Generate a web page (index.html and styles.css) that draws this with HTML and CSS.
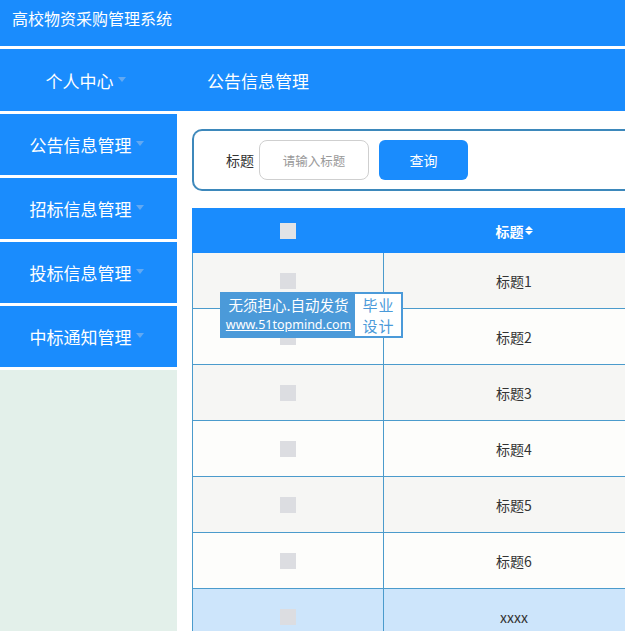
FILE: index.html
```html
<!DOCTYPE html>
<html lang="zh">
<head>
<meta charset="utf-8">
<title>高校物资采购管理系统</title>
<link rel="stylesheet" href="styles.css">
</head>
<body>
<div class="page">
  <header class="topbar">高校物资采购管理系统</header>
  <nav class="navbar">
    <div class="nav-home">个人中心<span class="caret"></span></div>
    <div class="nav-title">公告信息管理</div>
  </nav>
  <div class="layout">
    <aside class="sidebar">
      <div class="side-item">公告信息管理<span class="caret"></span></div>
      <div class="side-item">招标信息管理<span class="caret"></span></div>
      <div class="side-item">投标信息管理<span class="caret"></span></div>
      <div class="side-item">中标通知管理<span class="caret"></span></div>
      <div class="side-fill"></div>
    </aside>
    <main class="main">
      <div class="search">
        <span class="search-label">标题</span>
        <div class="search-input">请输入标题</div>
        <div class="search-btn">查询</div>
      </div>
      <div class="table">
        <div class="row head">
          <div class="cell c1"><span class="check"></span></div>
          <div class="cell c2">标题<span class="sort"><i class="up"></i><i class="down"></i></span></div>
        </div>
        <div class="row odd"><div class="cell c1"><span class="check"></span></div><div class="cell c2">标题1</div></div>
        <div class="row even"><div class="cell c1"><span class="check"></span></div><div class="cell c2">标题2</div></div>
        <div class="row odd"><div class="cell c1"><span class="check"></span></div><div class="cell c2">标题3</div></div>
        <div class="row even"><div class="cell c1"><span class="check"></span></div><div class="cell c2">标题4</div></div>
        <div class="row odd"><div class="cell c1"><span class="check"></span></div><div class="cell c2">标题5</div></div>
        <div class="row even"><div class="cell c1"><span class="check"></span></div><div class="cell c2">标题6</div></div>
        <div class="row sel"><div class="cell c1"><span class="check"></span></div><div class="cell c2">xxxx</div></div>
      </div>
      <div class="badge">
        <div class="badge-left">
          <div class="badge-l1">无须担心.自动发货</div>
          <div class="badge-l2">www.51topmind.com</div>
        </div>
        <div class="badge-right"><div>毕业</div><div>设计</div></div>
      </div>
    </main>
  </div>
</div>
</body>
</html>
```
FILE: styles.css
```css
* { box-sizing: border-box; }
html, body { margin: 0; padding: 0; background: #fff; }
body {
  font-family: "Noto Sans CJK SC", "Noto Sans", sans-serif;
  width: 625px;
  height: 631px;
  overflow: hidden;
}
.page { width: 625px; height: 631px; overflow: hidden; display: flex; flex-direction: column; }
.topbar {
  height: 46px;
  flex: none;
  background: #1a8cfd;
  color: #fff;
  font-size: 16px;
  line-height: 36px;
  padding-left: 12px;
}
.navbar {
  margin-top: 3px;
  height: 62px;
  flex: none;
  background: #1a8cfd;
  color: #fff;
  font-size: 17px;
  display: flex;
  align-items: center;
}
.nav-home { width: 171px; text-align: center; }
.nav-title { padding-left: 36px; }
.caret {
  display: inline-block;
  width: 0; height: 0;
  border-left: 4.5px solid transparent;
  border-right: 4.5px solid transparent;
  border-top: 5px solid #63a9f2;
  vertical-align: middle;
  margin-left: 4px;
  position: relative;
  top: -3px;
}
.layout { display: flex; margin-top: 3px; flex: 1; min-height: 0; }
.sidebar { width: 177px; flex: none; display: flex; flex-direction: column; }
.side-item {
  height: 61px;
  margin-bottom: 3px;
  background: #1a8cfd;
  color: #fff;
  font-size: 17px;
  display: flex;
  align-items: center;
  justify-content: center;
  padding-right: 4px;
}
.side-item .caret { top: -1px; }
.side-fill { flex: 1; background: #e3f0ea; }
.main { flex: none; width: 700px; padding: 15px 0 0 15px; position: relative; }
.search {
  height: 62px;
  border: 2px solid #3d88bb;
  border-right: none;
  border-radius: 10px 0 0 10px;
  display: flex;
  align-items: center;
  padding-left: 32px;
}
.search-label { font-size: 14px; color: #333; margin-right: 5px; }
.search-input {
  width: 110px; height: 40px;
  border: 1px solid #cfcfcf;
  border-radius: 8px;
  font-size: 12.5px;
  color: #9a9a9a;
  display: flex; align-items: center; justify-content: center;
}
.search-btn {
  width: 89px; height: 40px;
  margin-left: 10px;
  background: #1a8cfd;
  border-radius: 6px;
  color: #fff;
  font-size: 14px;
  display: flex; align-items: center; justify-content: center;
}
.table { margin-top: 17px; width: 452px; }
.row { display: flex; }
.row .cell { display: flex; align-items: center; justify-content: center; font-size: 14px; color: #333; }
.c1 { width: 192px; border-left: 1px solid #4b9bcc; border-right: 1px solid #4b9bcc; }
.c2 { flex: 1; }
.head { height: 45px; background: #1a8cfd; }
.head .cell { color: #fff; font-weight: bold; border-left-color: #1a8cfd; border-right-color: #1a8cfd; }
.odd, .even, .sel { height: 56px; border-bottom: 1px solid #4b9bcc; }
.odd { background: #f6f6f4; }
.even { background: #fdfdfb; }
.sel { background: #cde5fb; }
.check { width: 16px; height: 16px; background: #dcdde1; display: block; }
.head .check { background: #e1e3e6; }
.sort { display: inline-flex; flex-direction: column; margin-left: 1px; gap: 1px; }
.sort i { display: block; width: 0; height: 0; border-left: 4.5px solid transparent; border-right: 4.5px solid transparent; }
.sort .up { border-bottom: 4.5px solid #fff; }
.sort .down { border-top: 4.5px solid #fff; }
.badge {
  position: absolute;
  left: 43px;
  top: 178px;
  width: 183px;
  height: 46px;
  background: #4b9ad9;
  display: flex;
  align-items: center;
  padding: 2px;
}
.badge-left { width: 133px; flex: none; color: #fff; text-align: center; line-height: 20px; white-space: nowrap; }
.badge-l1 { font-size: 14.5px; }
.badge-l2 { font-size: 12.5px; text-decoration: underline; font-family: "Noto Sans", sans-serif; }
.badge-right {
  width: 46px; height: 42px;
  margin-left: auto;
  background: #fff;
  color: #4b9ad9;
  font-size: 15px;
  line-height: 21px;
  text-align: center;
  letter-spacing: 1px;
  padding-left: 1px;
}
```
